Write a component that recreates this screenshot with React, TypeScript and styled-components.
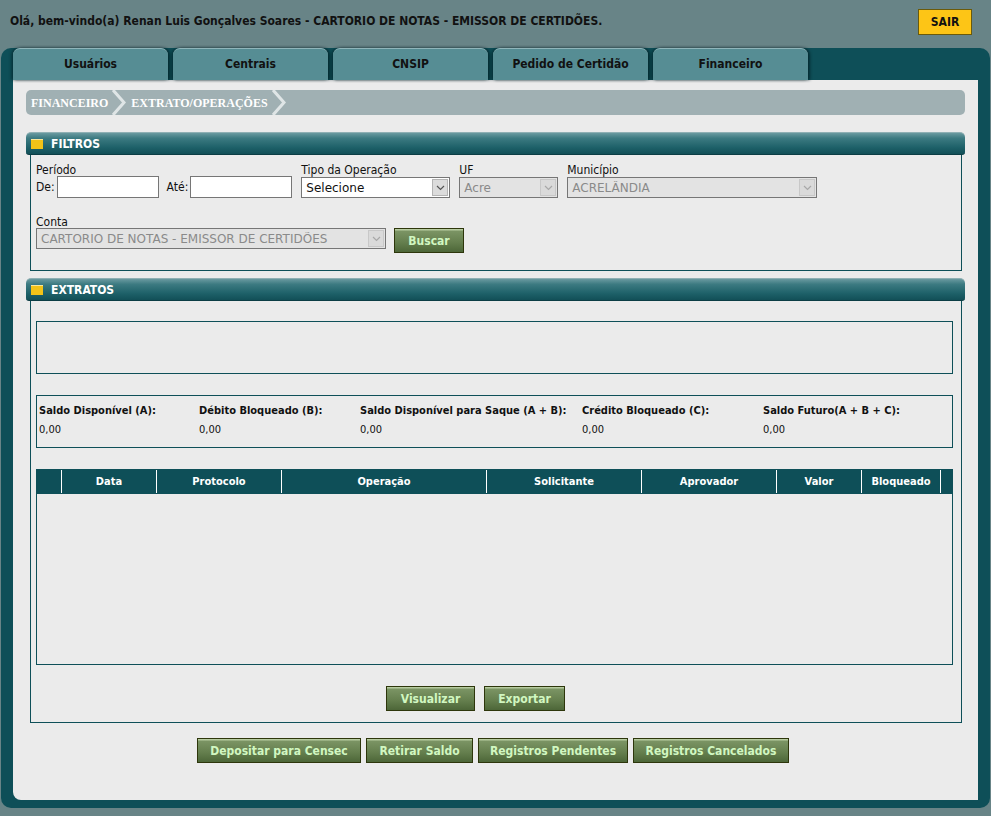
import React from 'react';
import styled, { createGlobalStyle } from 'styled-components';

const GlobalStyle = createGlobalStyle`
  html, body {
    margin: 0;
    padding: 0;
    background: #688487;
  }
  body {
    font-family: "DejaVu Sans Condensed", "DejaVu Sans", sans-serif;
    font-size: 12px;
    color: #111;
  }
  * {
    box-sizing: border-box;
  }
`;

const TEAL = '#0e4f58';

const TopBar = styled.header`
  height: 56px;
  display: flex;
  align-items: flex-start;
  justify-content: space-between;
  padding: 9px 19px 0 10px;
`;

const Welcome = styled.div`
  font-weight: bold;
  font-size: 12px;
  line-height: 25px;
  color: #111;
`;

const ExitButton = styled.button`
  width: 54px;
  height: 26px;
  background: #fdc516;
  border: 1px solid #6b5a0a;
  font-family: inherit;
  font-weight: bold;
  font-size: 12px;
  color: #111;
  padding: 0;
  cursor: pointer;
`;

const Shell = styled.div`
  margin: 0 1px;
  background: ${TEAL};
  border-radius: 10px;
  padding: 0 12px 8px 12px;
`;

const TabRow = styled.nav`
  display: flex;
  gap: 5px;
  margin-top: -8px;
  height: 32px;
`;

const Tab = styled.div`
  width: 155px;
  height: 32px;
  background: #568d94;
  border-top: 1px solid #8fb5ba;
  border-radius: 7px 7px 0 0;
  box-shadow: 2px 0 3px rgba(0, 30, 35, 0.7), -2px 0 3px rgba(0, 30, 35, 0.5);
  text-align: center;
  padding-top: 8px;
  font-weight: bold;
  font-size: 12px;
  color: #111;
`;

const Panel = styled.main`
  background: #ebebeb;
  border-radius: 0 0 0 8px;
  padding: 10px 13px 12px 13px;
  height: 720px;
  display: flex;
  flex-direction: column;
`;

const Breadcrumb = styled.div`
  height: 25px;
  background: #a0b0b3;
  border-radius: 5px;
  display: flex;
  align-items: center;
  overflow: hidden;
  font-family: "Liberation Serif", serif;
  font-weight: bold;
  font-size: 12px;
  color: #fff;
`;

const Crumb = styled.span`
  display: flex;
  align-items: center;
  padding-left: 5px;
  padding-top: 1px;
  height: 100%;
`;

const Chevron = styled.svg`
  margin-left: 4px;
  margin-top: -1px;
  flex: none;
`;

const SectionHeader = styled.div<{ $top: number }>`
  margin-top: ${p => p.$top}px;
  height: 23px;
  border-radius: 5px 5px 3px 3px;
  background: linear-gradient(to bottom, #6a9aa0 0%, #3c7a81 25%, #1d6068 70%, #124f57 100%);
  border-top: 1px solid #8fb0b4;
  border-bottom: 1px solid #0b3d44;
  display: flex;
  align-items: center;
  padding-left: 5px;
  gap: 8px;
  color: #fff;
  font-weight: bold;
  font-size: 12px;
`;

const YellowMark = styled.span`
  width: 12px;
  height: 10px;
  background: #f2c318;
  border-top: 1px solid #fbe79a;
`;

const SectionBox = styled.section`
  margin: 0 3px 0 4px;
  border: 1px solid ${TEAL};
  border-top: none;
`;

const FilterBox = styled(SectionBox)`
  height: 116px;
  padding: 8px 0 0 5px;
`;

const FieldRow = styled.div`
  display: flex;
  gap: 9px;
  align-items: flex-end;
`;

const Field = styled.div`
  display: flex;
  flex-direction: column;
`;

const Label = styled.label<{ $gap?: number }>`
  font-size: 12px;
  line-height: 14px;
  color: #111;
  margin-left: ${p => p.$gap ?? 0}px;
`;

const InlinePair = styled.div`
  display: flex;
  align-items: center;
  gap: 2px;
  margin-top: -1px;
`;

const ContaLabel = styled(Label)`
  display: block;
  margin-top: 17px;
`;

const TextInput = styled.input`
  width: 102px;
  height: 22px;
  border: 1px solid #767676;
  background: #fff;
  font-family: inherit;
  font-size: 12px;
  padding: 0 3px;
`;

const SelectBox = styled.div<{ $width: number; $disabled?: boolean; $flush?: boolean }>`
  width: ${p => p.$width}px;
  height: 21px;
  border: 1px solid #767676;
  background: ${p => (p.$disabled ? '#e3e3e3' : '#fff')};
  color: ${p => (p.$disabled ? '#8a8a8a' : '#111')};
  display: flex;
  align-items: center;
  font-family: "DejaVu Sans", sans-serif;
  font-size: 12px;
  margin-top: ${p => (p.$flush ? 0 : 0)}px;
`;

const SelectValue = styled.span`
  flex: 1;
  padding-left: 4px;
  white-space: nowrap;
  overflow: hidden;
`;

const SelectArrow = styled.span<{ $disabled?: boolean }>`
  width: 16px;
  height: 17px;
  margin-right: 1px;
  background: ${p => (p.$disabled ? '#dadada' : '#dcdcdc')};
  border: 1px solid ${p => (p.$disabled ? '#c8c8c8' : '#b4b4b4')};
  display: flex;
  align-items: center;
  justify-content: center;
`;

const ContaRow = styled.div`
  display: flex;
  align-items: flex-start;
  gap: 8px;
  margin-top: -1px;
`;

const GreenButton = styled.button<{ $width: number }>`
  height: 25px;
  width: ${p => p.$width}px;
  padding: 0;
  background: linear-gradient(to bottom, #b6cb9f 0, #b6cb9f 1px, #7b9464 2px, #647e4d 60%, #4d6638 100%);
  border: 1px solid #2d360b;
  color: #d1f7c1;
  font-family: inherit;
  font-weight: bold;
  font-size: 12px;
  cursor: pointer;
`;

const ExtratoBox = styled(SectionBox)`
  height: 422px;
  padding: 20px 8px 0 5px;
  display: flex;
  flex-direction: column;
  gap: 21px;
`;

const EmptyBox = styled.div`
  height: 53px;
  border: 1px solid ${TEAL};
`;

const SaldoBox = styled.div`
  height: 53px;
  border: 1px solid ${TEAL};
  display: grid;
  grid-template-columns: 160px 161px 222px 181px 1fr;
  grid-auto-rows: min-content;
  padding: 8px 0 0 2px;
  row-gap: 5px;
`;

const SaldoLabel = styled.div`
  font-weight: bold;
  font-size: 11px;
  line-height: 14px;
  white-space: nowrap;
`;

const SaldoValue = styled.div`
  font-size: 11px;
  line-height: 14px;
`;

const Grid = styled.div`
  height: 196px;
  border: 1px solid ${TEAL};
`;

const GridHead = styled.div`
  display: flex;
  height: 25px;
  background: ${TEAL};
  margin: -1px -1px 0 -1px;
`;

const HeadCell = styled.div<{ $width: number; $last?: boolean }>`
  width: ${p => p.$width}px;
  border-right: ${p => (p.$last ? 'none' : '1px solid #fff')};
  color: #fff;
  font-weight: bold;
  font-size: 11px;
  display: flex;
  align-items: center;
  justify-content: center;
  margin: 1px 0;
`;

const ActionRow = styled.div`
  display: flex;
  justify-content: center;
  gap: 9px;
  padding-right: 38px;
`;

const FooterRow = styled.div`
  display: flex;
  justify-content: center;
  gap: 5px;
  margin-top: 15px;
  padding-right: 5px;
`;

const ArrowDown = ({ color }: { color: string }) => (
  <svg width="9" height="6" viewBox="0 0 9 6">
    <path d="M1 1 L4.5 4.5 L8 1" fill="none" stroke={color} strokeWidth="1.2" />
  </svg>
);

const Select = ({ width, value, disabled }: { width: number; value: string; disabled?: boolean }) => (
  <SelectBox $width={width} $disabled={disabled}>
    <SelectValue>{value}</SelectValue>
    <SelectArrow $disabled={disabled}>
      <ArrowDown color={disabled ? '#a8a8a8' : '#555'} />
    </SelectArrow>
  </SelectBox>
);

const CrumbArrow = () => (
  <Chevron width="14" height="25" viewBox="0 0 14 25">
    <path d="M1 0 L12 12.5 L1 25" fill="none" stroke="#dfe5e6" strokeWidth="3" />
  </Chevron>
);

const tabs = ['Usuários', 'Centrais', 'CNSIP', 'Pedido de Certidão', 'Financeiro'];

const saldos = [
  'Saldo Disponível (A):',
  'Débito Bloqueado (B):',
  'Saldo Disponível para Saque (A + B):',
  'Crédito Bloqueado (C):',
  'Saldo Futuro(A + B + C):',
];

const columns: { label: string; width: number }[] = [
  { label: '', width: 26 },
  { label: 'Data', width: 95 },
  { label: 'Protocolo', width: 125 },
  { label: 'Operação', width: 205 },
  { label: 'Solicitante', width: 155 },
  { label: 'Aprovador', width: 135 },
  { label: 'Valor', width: 85 },
  { label: 'Bloqueado', width: 79 },
  { label: '', width: 12 },
];

const footerButtons: { label: string; width: number }[] = [
  { label: 'Depositar para Censec', width: 164 },
  { label: 'Retirar Saldo', width: 107 },
  { label: 'Registros Pendentes', width: 150 },
  { label: 'Registros Cancelados', width: 156 },
];

const App: React.FC = () => {
  return (
    <>
      <GlobalStyle />
      <TopBar>
        <Welcome>
          Olá, bem-vindo(a) Renan Luis Gonçalves Soares - CARTORIO DE NOTAS - EMISSOR DE CERTIDÕES.
        </Welcome>
        <ExitButton>SAIR</ExitButton>
      </TopBar>

      <Shell>
        <TabRow>
          {tabs.map(t => (
            <Tab key={t}>{t}</Tab>
          ))}
        </TabRow>

        <Panel>
          <Breadcrumb>
            <Crumb>
              FINANCEIRO
              <CrumbArrow />
            </Crumb>
            <Crumb>
              EXTRATO/OPERAÇÕES
              <CrumbArrow />
            </Crumb>
          </Breadcrumb>

          <SectionHeader $top={17}>
            <YellowMark />
            FILTROS
          </SectionHeader>
          <FilterBox>
            <FieldRow>
              <Field>
                <Label>Período</Label>
                <InlinePair>
                  <Label>De:</Label>
                  <TextInput />
                  <Label $gap={6}>Até:</Label>
                  <TextInput />
                </InlinePair>
              </Field>
              <Field>
                <Label>Tipo da Operação</Label>
                <Select width={149} value="Selecione" />
              </Field>
              <Field>
                <Label>UF</Label>
                <Select width={99} value="Acre" disabled />
              </Field>
              <Field>
                <Label>Município</Label>
                <Select width={250} value="ACRELÂNDIA" disabled />
              </Field>
            </FieldRow>
            <ContaLabel>Conta</ContaLabel>
            <ContaRow>
              <Select width={350} value="CARTORIO DE NOTAS - EMISSOR DE CERTIDÕES" disabled />
              <GreenButton $width={70}>Buscar</GreenButton>
            </ContaRow>
          </FilterBox>

          <SectionHeader $top={7}>
            <YellowMark />
            EXTRATOS
          </SectionHeader>
          <ExtratoBox>
            <EmptyBox />
            <SaldoBox>
              {saldos.map(s => (
                <SaldoLabel key={s}>{s}</SaldoLabel>
              ))}
              {saldos.map(s => (
                <SaldoValue key={s}>0,00</SaldoValue>
              ))}
            </SaldoBox>
            <Grid>
              <GridHead>
                {columns.map((c, i) => (
                  <HeadCell key={i} $width={c.width} $last={i === columns.length - 1}>
                    {c.label}
                  </HeadCell>
                ))}
              </GridHead>
            </Grid>
            <ActionRow>
              <GreenButton $width={89}>Visualizar</GreenButton>
              <GreenButton $width={81}>Exportar</GreenButton>
            </ActionRow>
          </ExtratoBox>

          <FooterRow>
            {footerButtons.map(b => (
              <GreenButton key={b.label} $width={b.width}>
                {b.label}
              </GreenButton>
            ))}
          </FooterRow>
        </Panel>
      </Shell>
    </>
  );
};

export default App;
